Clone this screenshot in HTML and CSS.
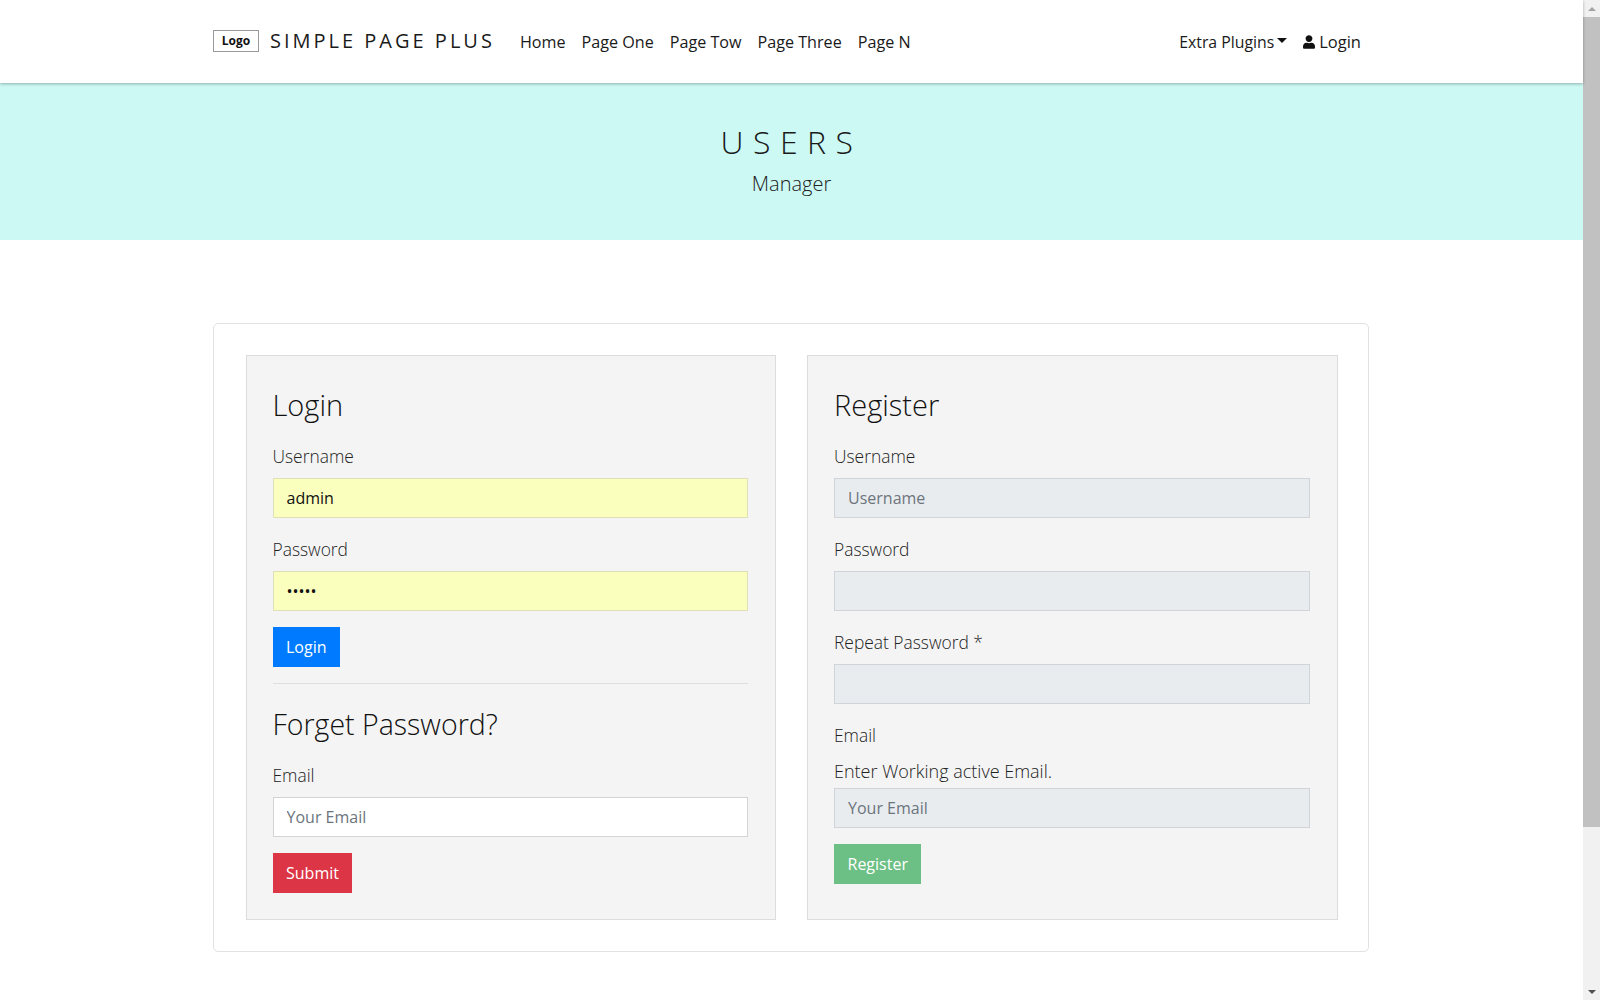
FILE: index.html
```html
<!DOCTYPE html>
<html lang="en">
<head>
<meta charset="utf-8">
<title>Users Manager</title>
<link rel="stylesheet" href="styles.css">
</head>
<body>
<div class="page">
  <header class="navbar">
    <div class="nav-inner">
      <a class="logo">Logo</a>
      <a class="brand">SIMPLE PAGE PLUS</a>
      <nav class="nav-main">
        <a>Home</a><a>Page One</a><a>Page Tow</a><a>Page Three</a><a>Page N</a>
      </nav>
      <nav class="nav-right">
        <a class="dropdown">Extra Plugins<span class="caret"></span></a>
        <a class="login-link"><svg class="user-icon" viewBox="0 0 448 512"><path d="M224 256c70.7 0 128-57.3 128-128S294.7 0 224 0 96 57.3 96 128s57.3 128 128 128zm89.6 32h-16.7c-22.2 10.2-46.9 16-72.9 16s-50.6-5.8-72.9-16h-16.7C60.2 288 0 348.2 0 422.4V464c0 26.5 21.5 48 48 48h352c26.5 0 48-21.5 48-48v-41.6c0-74.2-60.2-134.4-134.4-134.4z"/></svg>Login</a>
      </nav>
    </div>
  </header>
  <section class="hero">
    <h1 class="hero-title">USERS</h1>
    <p class="hero-sub">Manager</p>
  </section>
  <main class="card">
    <section class="panel panel-left">
      <h3>Login</h3>
      <div class="group"><label>Username</label><input class="field autofill" type="text" value="admin"></div>
      <div class="group"><label>Password</label><input class="field autofill" type="password" value="admin"></div>
      <button class="btn blue">Login</button>
      <hr>
      <h3 class="tight">Forget Password?</h3>
      <div class="group"><label>Email</label><input class="field" type="text" placeholder="Your Email"></div>
      <button class="btn red">Submit</button>
    </section>
    <section class="panel">
      <h3>Register</h3>
      <div class="group"><label>Username</label><input class="field off" type="text" placeholder="Username" disabled></div>
      <div class="group"><label>Password</label><input class="field off" type="password" disabled></div>
      <div class="group"><label>Repeat Password *</label><input class="field off" type="password" disabled></div>
      <div class="group"><label>Email</label><label class="help">Enter Working active Email.</label><input class="field off" type="text" placeholder="Your Email" disabled></div>
      <button class="btn green">Register</button>
    </section>
  </main>
</div>
<aside class="scrollbar">
  <div class="sb-btn"><span class="sb-up"></span></div>
  <div class="sb-thumb"></div>
  <div class="sb-track"></div>
  <div class="sb-btn"><span class="sb-down"></span></div>
</aside>
</body>
</html>
```

FILE: styles.css
```css
* { box-sizing: border-box; }
html, body { margin: 0; height: 1000px; overflow: hidden; }
body {
  display: flex;
  font-family: "Open Sans", "Noto Sans", sans-serif;
  color: #212529;
  background: #fff;
}
.page { flex: 1; min-width: 0; }

.navbar {
  height: 83px;
  background: #fff;
  box-shadow: 0 1px 3px rgba(0,0,0,.3);
  position: relative;
}
.nav-inner {
  margin-left: 213px;
  width: 1148px;
  height: 83px;
  display: flex;
  align-items: center;
}
.logo {
  width: 46px;
  height: 22px;
  border: 1px solid #999;
  font-size: 12px;
  font-weight: 700;
  line-height: 20px;
  text-align: center;
  color: #111;
  margin-top: -1px;
}
.brand {
  margin-left: 11px;
  font-size: 20px;
  letter-spacing: 3px;
  color: #1a1a1a;
  margin-top: -2px;
}
.nav-main { display: flex; gap: 16px; margin-left: 25px; font-size: 16.15px; color: #1a1a1a; }
.nav-right { margin-left: auto; display: flex; gap: 16px; font-size: 15.8px; color: #1a1a1a; align-items: center; }
.dropdown { display: flex; align-items: center; }
.caret {
  margin-left: 3px;
  margin-top: -3px;
  border-top: 5px solid #111;
  border-left: 5px solid transparent;
  border-right: 5px solid transparent;
}
.login-link { display: flex; align-items: center; font-size: 16.5px; }
.user-icon { width: 12px; height: 14px; margin-right: 4px; fill: #111; }

.hero {
  height: 157px;
  background: #ccf9f4;
  text-align: center;
  padding-top: 36px;
}
.hero-title {
  margin: 0;
  font-size: 32px;
  font-weight: 300;
  line-height: 46px;
  letter-spacing: 9.5px;
  color: #1a1a1a;
}
.hero-sub {
  margin: 0;
  font-size: 20px;
  font-weight: 300;
  line-height: 38px;
  color: #222;
}

.card {
  margin: 83px 0 0 213px;
  width: 1156px;
  height: 629px;
  border: 1px solid #e2e2e2;
  border-radius: 5px;
  padding: 31px 30px 31px 32px;
  display: grid;
  grid-template-columns: 530px 531px;
  column-gap: 31px;
  align-items: start;
}
.panel {
  background: #f4f4f4;
  border: 1px solid #dcdcdc;
  padding: 25px 27px 26px 26px;
  height: 565px;
}
.panel-left { padding-left: 25.5px; }
h3 {
  margin: 0 0 13px;
  padding-top: 1px;
  font-size: 29px;
  font-weight: 300;
  line-height: 46px;
  color: #111;
}
h3.tight { font-size: 28.5px; }
.group { margin-bottom: 16px; }
label {
  display: block;
  padding-top: 1px;
  font-size: 17.4px;
  font-weight: 300;
  line-height: 29px;
  margin-bottom: 7px;
  color: #222;
}
.help { font-size: 18px; margin-bottom: 2px; margin-top: -1px; }
.field {
  display: block;
  width: 100%;
  height: 40px;
  padding: 0 13px;
  border: 1px solid #d4d4d4;
  border-radius: 0;
  background: #fff;
  font: 400 16px "Open Sans", "Noto Sans", sans-serif;
  color: #111;
  outline: none;
}
.field::placeholder { color: #6c757d; opacity: 1; }
.autofill { background: #faffbd; border-color: #dfe0b8; }
.off { background: #e9ecef; border-color: #ced4da; }
.btn {
  display: block;
  height: 40px;
  padding: 0 13.5px;
  border: 0;
  border-radius: 0;
  font: 400 16px "Open Sans", "Noto Sans", sans-serif;
  color: #fff;
}
.blue { background: #007bff; }
.red { background: #dc3545; }
.green { background: #6dc085; }
hr {
  margin: 16px 0;
  border: 0;
  border-top: 1px solid #dedede;
}

.scrollbar {
  width: 17px;
  height: 1000px;
  flex: none;
  background: #f1f1f1;
  display: flex;
  flex-direction: column;
}
.sb-btn { height: 17px; display: flex; align-items: center; justify-content: center; }
.sb-up { border-bottom: 4px solid #a3a3a3; border-left: 4px solid transparent; border-right: 4px solid transparent; }
.sb-down { border-top: 4px solid #505050; border-left: 4px solid transparent; border-right: 4px solid transparent; }
.sb-thumb { height: 810px; background: #c1c1c1; }
.sb-track { flex: 1; }
```
